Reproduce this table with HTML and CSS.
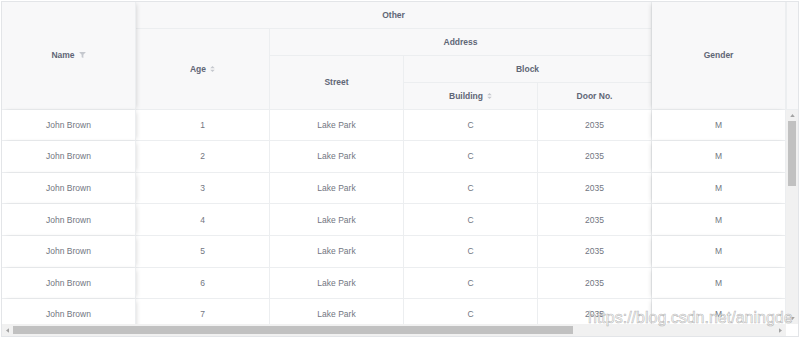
FILE: index.html
```html
<!DOCTYPE html>
<html>
<head>
<meta charset="utf-8">
<link rel="stylesheet" href="styles.css">
</head>
<body>
<div class="frame">
  <div class="main">
    <div class="viewport">
      <table class="grid">
        <colgroup>
          <col class="c-std"><col class="c-std"><col class="c-std"><col class="c-std"><col class="c-door"><col class="c-std">
        </colgroup>
        <thead>
          <tr class="hrow">
            <th rowspan="4" class="fix-l"><span class="hcell">Name <svg class="ico filter" viewBox="0 0 8 7"><path d="M0 0H8L5 3.2V7L3 6V3.2Z"/></svg></span></th>
            <th colspan="4">Other</th>
            <th rowspan="4" class="fix-r">Gender</th>
          </tr>
          <tr class="hrow">
            <th rowspan="3"><span class="hcell">Age <svg class="ico sort" viewBox="0 0 6 8"><path d="M3 0L6 3H0Z"/><path d="M3 8L6 5H0Z"/></svg></span></th>
            <th colspan="3">Address</th>
          </tr>
          <tr class="hrow">
            <th rowspan="2">Street</th>
            <th colspan="2">Block</th>
          </tr>
          <tr class="hrow">
            <th><span class="hcell">Building <svg class="ico sort" viewBox="0 0 6 8"><path d="M3 0L6 3H0Z"/><path d="M3 8L6 5H0Z"/></svg></span></th>
            <th>Door No.</th>
          </tr>
        </thead>
        <tbody>
          <tr class="brow"><td class="fix-l">John Brown</td><td>1</td><td>Lake Park</td><td>C</td><td>2035</td><td class="fix-r">M</td></tr>
          <tr class="brow"><td class="fix-l">John Brown</td><td>2</td><td>Lake Park</td><td>C</td><td>2035</td><td class="fix-r">M</td></tr>
          <tr class="brow"><td class="fix-l">John Brown</td><td>3</td><td>Lake Park</td><td>C</td><td>2035</td><td class="fix-r">M</td></tr>
          <tr class="brow"><td class="fix-l">John Brown</td><td>4</td><td>Lake Park</td><td>C</td><td>2035</td><td class="fix-r">M</td></tr>
          <tr class="brow"><td class="fix-l">John Brown</td><td>5</td><td>Lake Park</td><td>C</td><td>2035</td><td class="fix-r">M</td></tr>
          <tr class="brow"><td class="fix-l">John Brown</td><td>6</td><td>Lake Park</td><td>C</td><td>2035</td><td class="fix-r">M</td></tr>
          <tr class="brow"><td class="fix-l">John Brown</td><td>7</td><td>Lake Park</td><td>C</td><td>2035</td><td class="fix-r">M</td></tr>
        </tbody>
      </table>
    </div>
    <div class="vscroll">
      <div class="gutter"></div>
      <div class="vbar">
        <div class="arrow"><svg viewBox="0 0 6 4"><path d="M3 0L6 4H0Z"/></svg></div>
        <div class="vtrack"><div class="vthumb"></div></div>
        <div class="arrow"><svg viewBox="0 0 6 4"><path d="M0 0H6L3 4Z"/></svg></div>
      </div>
    </div>
  </div>
  <div class="hscroll">
    <div class="harrow"><svg viewBox="0 0 4 6"><path d="M4 0V6L0 3Z"/></svg></div>
    <div class="htrack"><div class="hthumb"></div></div>
    <div class="harrow"><svg viewBox="0 0 4 6"><path d="M0 0V6L4 3Z"/></svg></div>
    <div class="corner"></div>
  </div>
  <div class="watermark">https://blog.csdn.net/aningde</div>
</div>
</body>
</html>
```

FILE: styles.css
```css
body {
  margin: 1px;
  background: #fff;
  font-family: "Liberation Sans", Arial, sans-serif;
}

.frame {
  position: relative;
  width: 796px;
  border: 1px solid #e3e5e8;
  display: flex;
  flex-direction: column;
}

.main {
  display: flex;
  height: 322px;
}

.viewport {
  width: 784px;
  height: 322px;
  overflow: hidden;
}

.grid {
  width: 784px;
  table-layout: fixed;
  border-collapse: separate;
  border-spacing: 0;
  color: #606676;
  font-size: 8.5px;
}

.c-std { width: 134px; }
.c-door { width: 114px; }

.grid th,
.grid td {
  box-sizing: border-box;
  padding: 0;
  text-align: center;
  vertical-align: middle;
  border-right: 1px solid #eceef0;
  border-bottom: 1px solid #eceef0;
  white-space: nowrap;
}

.grid th {
  background: #f8f8f9;
  font-weight: bold;
}

.grid td {
  background: #fff;
  color: #72767f;
}

.hrow { height: 26.9px; }
.brow { height: 31.6px; }

.fix-l {
  position: relative;
  z-index: 2;
  box-shadow: 2px 0 5px -2px rgba(0, 0, 0, 0.18);
}

.fix-r {
  position: relative;
  z-index: 2;
  box-shadow: -2px 0 5px -2px rgba(0, 0, 0, 0.18);
}

.hcell {
  display: inline-flex;
  align-items: center;
  gap: 4px;
}

.ico {
  fill: #c5c8ce;
}

.ico.filter {
  width: 7px;
  height: 6px;
}

.ico.sort {
  width: 5px;
  height: 6px;
}

.vscroll {
  width: 12px;
  display: flex;
  flex-direction: column;
}

.gutter {
  height: 107px;
  background: #f8f8f9;
  border-left: 1px solid #eceef0;
  border-bottom: 1px solid #eceef0;
}

.vbar {
  flex: 1;
  display: flex;
  flex-direction: column;
  background: #f1f1f1;
}

.arrow {
  height: 11px;
  display: flex;
  align-items: center;
  justify-content: center;
}

.arrow svg {
  width: 5px;
  height: 3px;
  fill: #a3a3a3;
}

.vtrack {
  flex: 1;
  padding: 0 2px;
}

.vthumb {
  height: 65px;
  background: #c1c1c1;
}

.hscroll {
  height: 12px;
  display: flex;
  background: #f1f1f1;
}

.harrow {
  width: 11px;
  display: flex;
  align-items: center;
  justify-content: center;
}

.harrow svg {
  width: 3px;
  height: 5px;
  fill: #a3a3a3;
}

.htrack {
  flex: 1;
  padding: 2px 0;
}

.hthumb {
  width: 560px;
  height: 100%;
  background: #c1c1c1;
}

.corner {
  width: 12px;
  background: #fff;
}

.watermark {
  position: absolute;
  left: 586px;
  top: 308px;
  z-index: 5;
  font-size: 16px;
  line-height: 16px;
  color: rgba(255, 255, 255, 0.75);
  -webkit-text-stroke: 0.6px rgba(120, 120, 120, 0.55);
  white-space: nowrap;
  pointer-events: none;
}
```
